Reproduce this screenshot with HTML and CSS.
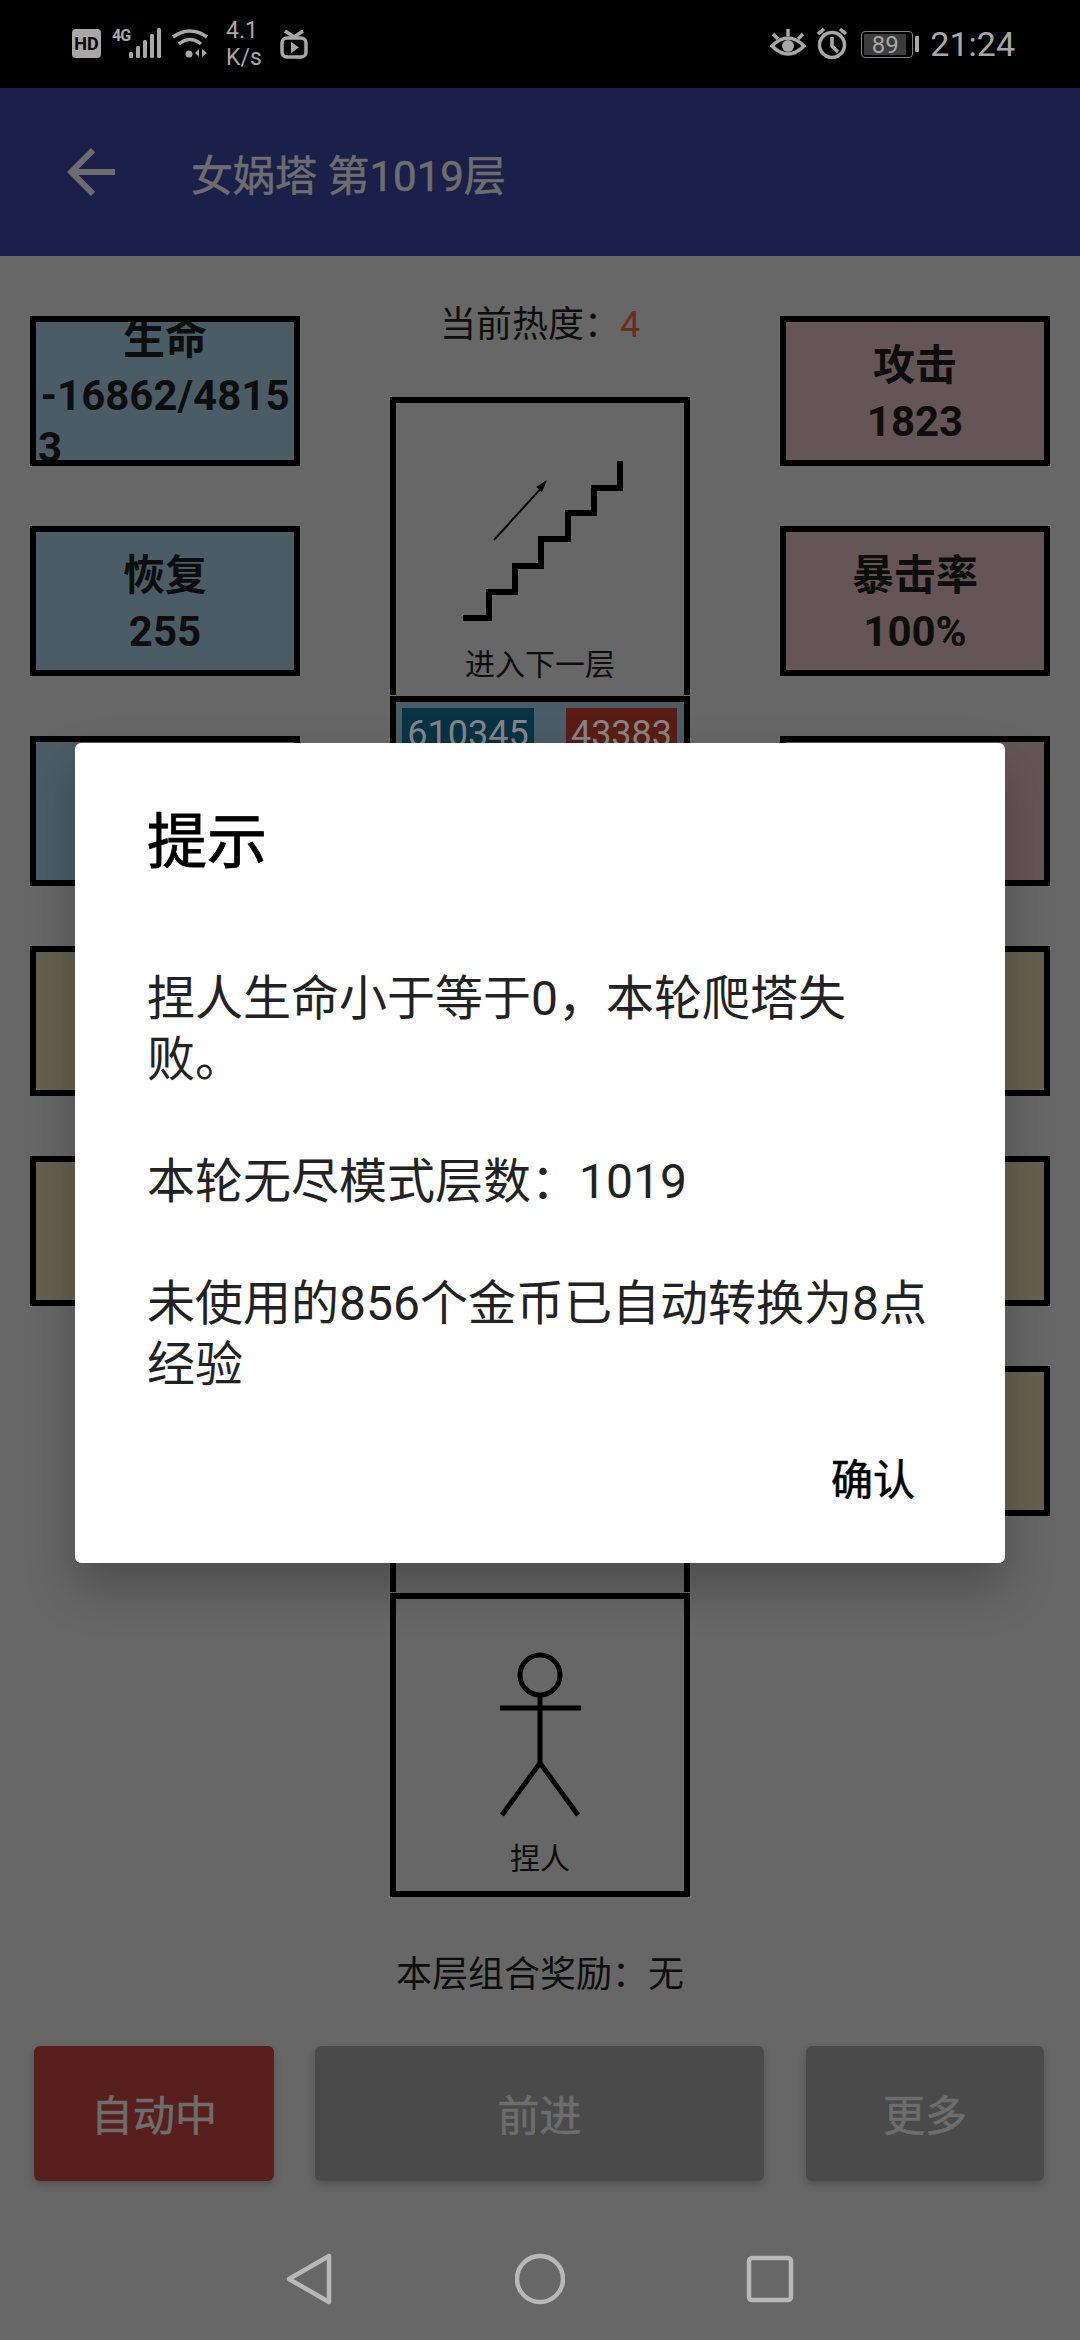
FILE: index.html
```html
<!DOCTYPE html>
<html lang="zh-CN">

<head>
  <meta charset="UTF-8">
  <meta name="viewport" content="width=device-width, initial-scale=1.0">
  <title>女娲塔</title>

  <link rel="stylesheet" href="styles.css">
</head>

<body>
  <div class="page">
    <div class="status-bar">
      <div class="status-group">
        <span class="hd-badge">HD</span>
        <svg class="icon-signal" width="50" height="32" viewBox="0 0 50 32">
          <text class="signal-text" x="0" y="14">4G</text>
          <rect x="17" y="25" width="4" height="6" rx="1.5" />
          <rect x="24" y="19" width="4" height="12" rx="1.5" />
          <rect x="31" y="13" width="4" height="18" rx="1.5" />
          <rect x="38" y="7" width="4" height="24" rx="1.5" />
          <rect x="45" y="1" width="4" height="30" rx="1.5" />
        </svg>
        <svg class="icon-wifi" width="38" height="32" viewBox="0 0 38 32">
          <path class="line" d="M2 9 Q19 -3 36 9" />
          <path class="line" d="M8 16 Q19 7 30 16" />
          <circle class="solid" cx="18" cy="26" r="3.5" />
          <path class="solid" d="M24 25 L28 21 V29 Z M31 21 V29 L36 25 Z" />
        </svg>
        <div class="net-speed">
          <div>4.1</div>
          <div>K/s</div>
        </div>
        <svg class="icon-tv" width="28" height="30" viewBox="0 0 28 30">
          <path class="line" d="M5 1 L14 7 L23 1" />
          <rect class="line" x="2" y="8" width="24" height="19" rx="5" />
          <path class="solid" d="M11 12 L19 17.5 L11 23 Z" />
        </svg>
      </div>
      <div class="status-group">
        <svg class="icon-eye" width="36" height="32" viewBox="0 0 36 32">
          <path class="line" d="M2 19 Q18 3 34 19 Q18 35 2 19 Z" />
          <circle class="solid" cx="18" cy="19" r="6" />
          <path class="line" d="M18 2 V9 M3 7 L8 12 M33 7 L28 12" />
        </svg>
        <svg class="icon-alarm" width="32" height="32" viewBox="0 0 32 32">
          <circle class="line" cx="16" cy="18" r="12.5" />
          <path class="line" d="M16 10 V19 L22 25 M2 7 L8 2 M30 7 L24 2" />
        </svg>
        <div class="battery">
          <div class="battery-body"><span class="battery-level">89</span></div>
          <div class="battery-tip"></div>
        </div>
        <span class="clock">21:24</span>
      </div>
    </div>

    <div class="toolbar">
      <svg class="back-arrow" width="72" height="72" viewBox="0 0 24 24">
        <path d="M20 11H7.83l5.59-5.59L12 4l-8 8 8 8 1.41-1.41L7.83 13H20v-2z" />
      </svg>
      <span class="toolbar-title">女娲塔 第1019层</span>
    </div>

    <div class="board">
      <div class="stat-column">
        <div class="stat-card blue">
          <div class="stat-label">生命</div>
          <div class="stat-value">-16862/4815</div>
          <div class="stat-rest">3</div>
        </div>
        <div class="stat-card blue">
          <div class="stat-label">恢复</div>
          <div class="stat-value">255</div>
        </div>
        <div class="stat-card blue"></div>
        <div class="stat-card yellow"></div>
        <div class="stat-card yellow"></div>
      </div>

      <div class="tower">
        <div class="heat">当前热度：<span class="heat-value">4</span></div>
        <div class="tower-cells">
          <div class="cell cell-stairs">
            <svg class="stairs" width="170" height="170" viewBox="0 0 170 170">
              <path class="stair-line" d="M5 162 H31 V136 H57 V110 H83 V83 H110 V57 H136 V32 H162 V5" />
              <path class="stair-arrow" d="M36 84 L86 29" />
              <path class="stair-head" d="M89 24 L84 36 L78 31 Z" />
            </svg>
            <div class="cell-name stairs-name">进入下一层</div>
          </div>
          <div class="cell cell-monster">
            <div class="chips">
              <span class="chip chip-blue">610345</span>
              <span class="chip chip-red">43383</span>
            </div>
          </div>
          <div class="cell"></div>
          <div class="cell"></div>
          <div class="cell cell-player">
            <svg class="stickman" width="90" height="166" viewBox="0 0 90 166">
              <circle cx="45" cy="23" r="20" />
              <path d="M45 43 V111 M5 56 H86 M45 111 L7 163 M45 111 L83 163" />
            </svg>
            <div class="cell-name player-name">捏人</div>
          </div>
        </div>
      </div>

      <div class="stat-column">
        <div class="stat-card red">
          <div class="stat-label">攻击</div>
          <div class="stat-value">1823</div>
        </div>
        <div class="stat-card red">
          <div class="stat-label">暴击率</div>
          <div class="stat-value">100%</div>
        </div>
        <div class="stat-card red"></div>
        <div class="stat-card yellow"></div>
        <div class="stat-card yellow"></div>
        <div class="stat-card yellow"></div>
      </div>
    </div>

    <div class="reward">本层组合奖励：无</div>

    <div class="actions">
      <div class="btn btn-auto">自动中</div>
      <div class="btn btn-next">前进</div>
      <div class="btn btn-more">更多</div>
    </div>

    <div class="nav-bar">
      <svg width="50" height="52" viewBox="0 0 50 52">
        <path d="M44 3 V49 L4 26 Z" class="nav-back" />
      </svg>
      <svg width="50" height="52" viewBox="0 0 50 52">
        <circle cx="25" cy="26" r="23" />
      </svg>
      <svg width="50" height="52" viewBox="0 0 50 52">
        <rect x="4" y="5" width="42" height="42" rx="3" />
      </svg>
    </div>

    <div class="dialog">
      <div class="dialog-title">提示</div>
      <div class="dialog-body">
        <p>捏人生命小于等于0，本轮爬塔失败。</p>
        <p>本轮无尽模式层数：1019</p>
        <p>未使用的856个金币已自动转换为8点经验</p>
      </div>
      <div class="dialog-actions">
        <span class="dialog-btn">确认</span>
      </div>
    </div>
  </div>
</body>

</html>
```

FILE: styles.css
```css
* {
  margin: 0;
  padding: 0;
  box-sizing: border-box;
}

body {
  font-family: Roboto, 'Noto Sans CJK SC', sans-serif;
  background-color: #676767;
}

.page {
  position: relative;
  display: flex;
  flex-direction: column;
  width: 1080px;
  height: 2340px;
  overflow: hidden;
  background-color: #676767;
  color: #0d0d0d;
}

/* status bar */
.status-bar {
  display: flex;
  justify-content: space-between;
  align-items: center;
  height: 88px;
  padding: 0 65px 0 72px;
  background-color: #000;
  color: #a8a8a8;
}

.status-group {
  display: flex;
  align-items: center;
}

.status-bar .line {
  fill: none;
  stroke: #a8a8a8;
  stroke-width: 3.5;
}

.status-bar .solid {
  fill: #a8a8a8;
}

.hd-badge {
  width: 29px;
  height: 29px;
  margin-top: -1px;
  border-radius: 4px;
  background-color: #a8a8a8;
  color: #000;
  font-size: 18px;
  font-weight: 700;
  line-height: 29px;
  text-align: center;
}

.icon-signal {
  margin: -2px 0 0 11px;
  fill: #a8a8a8;
}

.signal-text {
  font-size: 16px;
  font-weight: 700;
  letter-spacing: -1px;
}

.icon-wifi {
  margin: -1px 0 0 9px;
}

.net-speed {
  width: 46px;
  margin-left: 17px;
  font-size: 23px;
  line-height: 27px;
}

.icon-tv {
  margin: 1px 0 0 8px;
}

.icon-alarm {
  margin: -2px 0 0 10px;
}

.icon-eye {
  margin-top: -2px;
}

.battery {
  display: flex;
  align-items: center;
  margin-left: 13px;
}

.battery-body {
  width: 52px;
  height: 27px;
  padding: 2px;
  border: 1.5px solid #808080;
  border-radius: 4px;
}

.battery-level {
  display: block;
  width: 42px;
  height: 100%;
  background-color: #3c3c3c;
  font-size: 24px;
  line-height: 22px;
  text-align: center;
}

.battery-tip {
  width: 4px;
  height: 16px;
  margin-left: 2px;
  border-radius: 1px;
  background-color: #a8a8a8;
}

.clock {
  margin-left: 11px;
  font-size: 34px;
}

/* toolbar */
.toolbar {
  display: flex;
  align-items: center;
  height: 168px;
  padding-left: 55px;
  background-color: #1a2049;
  color: #6d6d6d;
}

.back-arrow {
  fill: #6d6d6d;
}

.toolbar-title {
  margin-left: 64px;
  font-size: 42px;
  -webkit-text-stroke: 0.6px #6d6d6d;
}

/* board */
.board {
  display: flex;
  justify-content: space-between;
  height: 1641px;
  padding: 40px 30px 0;
}

.stat-column {
  display: flex;
  flex-direction: column;
  gap: 60px;
  width: 270px;
  padding-top: 20px;
}

.stat-card {
  display: flex;
  flex-direction: column;
  justify-content: center;
  flex-shrink: 0;
  height: 150px;
  padding-top: 1px;
  overflow: hidden;
  border: 6px solid #000;
  font-size: 42px;
  font-weight: 700;
  text-align: center;
}

.blue {
  background-color: #4a5d67;
}

.red {
  background-color: #665556;
}

.yellow {
  background-color: #66604f;
}

.stat-label {
  flex-shrink: 0;
  line-height: 60px;
}

.stat-value {
  flex-shrink: 0;
  line-height: 52px;
}

.stat-rest {
  flex-shrink: 0;
  padding-left: 2px;
  line-height: 52px;
  text-align: left;
}

.tower {
  width: 300px;
}

.heat {
  height: 58px;
  margin-bottom: 43px;
  font-size: 36px;
  line-height: 58px;
  text-align: center;
  white-space: nowrap;
}

.heat-value {
  color: #6b2a1c;
}

.tower-cells {
  display: flex;
  flex-direction: column;
  gap: 1px;
}

.cell {
  height: 298px;
  border: 6px solid #000;
  border-bottom: 0;
}

.stairs {
  display: block;
  margin: 53px 0 0 62px;
}

.stair-line {
  fill: none;
  stroke: #000;
  stroke-width: 6;
}

.stair-arrow {
  fill: none;
  stroke: #000;
  stroke-width: 2;
}

.stair-head {
  fill: #000;
}

.cell-name {
  font-size: 30px;
  line-height: 40px;
  text-align: center;
}

.stairs-name {
  margin-top: 19px;
}

.cell-monster {
  background-color: #4a5d67;
}

.chips {
  display: flex;
  justify-content: space-between;
  padding: 6px 7px 0 6px;
}

.chip {
  height: 60px;
  color: #858585;
  font-size: 36px;
  line-height: 52px;
  text-align: center;
}

.chip-blue {
  width: 132px;
  background-color: #083246;
}

.chip-red {
  width: 111px;
  background-color: #5a1d14;
}

.cell-player {
  height: 304px;
  border-bottom: 6px solid #000;
}

.stickman {
  display: block;
  margin: 53px auto 0;
  fill: none;
  stroke: #000;
  stroke-width: 5;
}

.player-name {
  margin-top: 21px;
}

.reward {
  height: 56px;
  margin-top: 50px;
  font-size: 36px;
  line-height: 56px;
  text-align: center;
}

/* bottom buttons */
.actions {
  display: flex;
  height: 135px;
  margin-top: 43px;
  padding-left: 34px;
}

.btn {
  display: flex;
  align-items: center;
  justify-content: center;
  padding-bottom: 2px;
  border-radius: 6px;
  background-color: #4a4a4a;
  box-shadow: 0 4px 8px rgba(0, 0, 0, 0.2);
  color: #6d6d6d;
  font-size: 42px;
  -webkit-text-stroke: 0.6px #6d6d6d;
}

.btn-auto {
  width: 240px;
  background-color: #581f1c;
}

.btn-next {
  width: 449px;
  margin-left: 41px;
}

.btn-more {
  width: 238px;
  margin-left: 42px;
}

/* navigation bar */
.nav-bar {
  display: flex;
  justify-content: center;
  gap: 180px;
  padding-top: 72px;
}

.nav-bar svg {
  fill: none;
  stroke: #b8b8b8;
  stroke-width: 4.5;
  stroke-linejoin: round;
}

/* dialog */
.dialog {
  position: absolute;
  left: 75px;
  top: 743px;
  width: 930px;
  height: 820px;
  padding: 60px 72px 0;
  border-radius: 6px;
  background-color: #fff;
  box-shadow: 0 24px 48px rgba(0, 0, 0, 0.25);
}

.dialog-title {
  color: #000;
  font-size: 60px;
  line-height: 80px;
  -webkit-text-stroke: 0.8px #000;
}

.dialog-body {
  margin-top: 85px;
  color: #222;
  font-size: 48px;
  line-height: 61px;
}

.dialog-body p + p {
  margin-top: 61px;
}

.dialog-actions {
  display: flex;
  justify-content: flex-end;
  margin-top: 56px;
  padding-right: 18px;
}

.dialog-btn {
  color: #000;
  font-size: 42px;
  line-height: 60px;
  -webkit-text-stroke: 0.6px #000;
}
```
